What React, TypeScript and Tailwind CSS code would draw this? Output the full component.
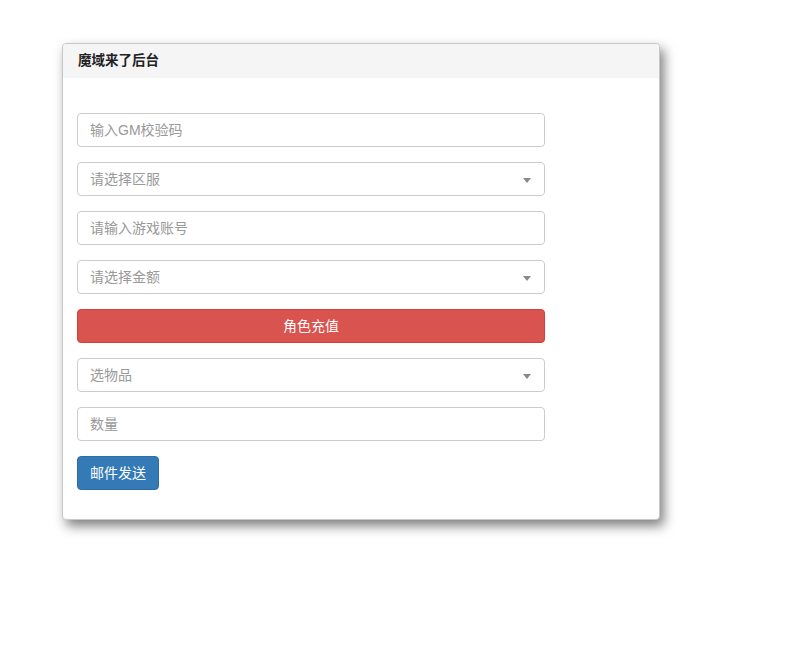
type FieldProps = Readonly<{
  placeholder: string;
  select?: boolean;
}>;

function Field({ placeholder, select = false }: FieldProps) {
  return (
    <div className="relative flex h-[34px] w-[468px] items-center rounded-[4px] border border-[#ccc] bg-white px-[12px] text-[14px] text-[#999]">
      <span>{placeholder}</span>
      {select && (
        <span className="absolute right-[13px] top-[15px] h-0 w-0 border-x-[4px] border-t-[5px] border-x-transparent border-t-[#888]" />
      )}
    </div>
  );
}

export default function App() {
  return (
    <div
      className="min-h-[667px] bg-white pl-[62px] pt-[43px]"
      style={{ fontFamily: '"Liberation Sans", "Noto Sans CJK SC", sans-serif' }}
    >
      <section className="w-[598px] overflow-hidden rounded-[4px] border border-[#c8c8c8] bg-white shadow-[4px_6px_12px_rgba(0,0,0,0.5)]">
        <div className="flex h-[34px] items-center bg-[#f5f5f5] px-[15px] text-[13.5px] font-bold text-[#222]">
          魔域来了后台
        </div>
        <div className="flex flex-col gap-[15px] px-[14px] pb-[29px] pt-[35px]">
          <Field placeholder="输入GM校验码" />
          <Field placeholder="请选择区服" select />
          <Field placeholder="请输入游戏账号" />
          <Field placeholder="请选择金额" select />
          <button className="h-[34px] w-[468px] rounded-[4px] border border-[#d43f3a] bg-[#d9534f] text-[14px] text-white">
            角色充值
          </button>
          <Field placeholder="选物品" select />
          <Field placeholder="数量" />
          <div>
            <button className="h-[34px] w-[82px] rounded-[4px] border border-[#2e6da4] bg-[#337ab7] text-[14px] text-white">
              邮件发送
            </button>
          </div>
        </div>
      </section>
    </div>
  );
}
